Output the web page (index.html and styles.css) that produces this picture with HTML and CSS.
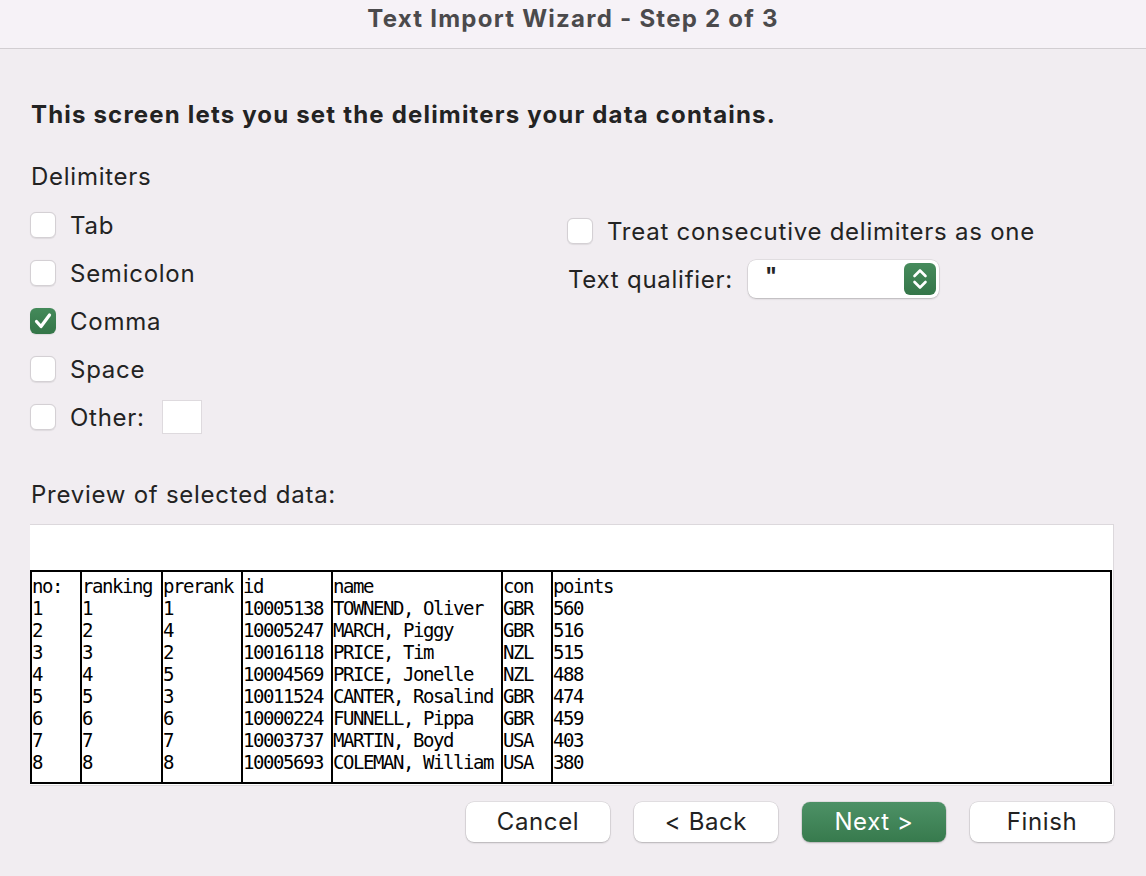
FILE: index.html
```html
<!DOCTYPE html>
<html>
<head>
<meta charset="utf-8">
<link rel="stylesheet" href="styles.css">
</head>
<body>
<div class="window">
  <div class="titlebar">Text Import Wizard - Step 2 of 3</div>
  <div class="content">
    <h1 class="heading">This screen lets you set the delimiters your data contains.</h1>
    <div class="section-label">Delimiters</div>
    <div class="options">
      <div class="col-left">
        <label class="opt"><span class="cb"></span><span>Tab</span></label>
        <label class="opt"><span class="cb"></span><span>Semicolon</span></label>
        <label class="opt"><span class="cb checked"><svg viewBox="0 0 26 26" width="26" height="26"><path d="M6.5 13.5 L11 18.5 L19.5 7" fill="none" stroke="#fff" stroke-width="3.2" stroke-linecap="round" stroke-linejoin="round"/></svg></span><span>Comma</span></label>
        <label class="opt"><span class="cb"></span><span>Space</span></label>
        <label class="opt"><span class="cb"></span><span>Other:</span><span class="other-box"></span></label>
      </div>
      <div class="col-right">
        <label class="opt"><span class="cb"></span><span>Treat consecutive delimiters as one</span></label>
        <div class="qualifier">
          <span>Text qualifier:</span>
          <div class="select">
            <span class="select-val">"</span>
            <span class="stepper"><svg viewBox="0 0 32 32" width="32" height="32"><path d="M10.5 13 L16 7.5 L21.5 13" fill="none" stroke="#fff" stroke-width="2.6" stroke-linecap="round" stroke-linejoin="round"/><path d="M10.5 19 L16 24.5 L21.5 19" fill="none" stroke="#fff" stroke-width="2.6" stroke-linecap="round" stroke-linejoin="round"/></svg></span>
          </div>
        </div>
      </div>
    </div>
    <div class="section-label preview-label">Preview of selected data:</div>
    <div class="preview">
      <div class="grid">
        <div class="gcol c1">no:<br>1<br>2<br>3<br>4<br>5<br>6<br>7<br>8</div>
        <div class="gcol c2">ranking<br>1<br>2<br>3<br>4<br>5<br>6<br>7<br>8</div>
        <div class="gcol c3">prerank<br>1<br>4<br>2<br>5<br>3<br>6<br>7<br>8</div>
        <div class="gcol c4">id<br>10005138<br>10005247<br>10016118<br>10004569<br>10011524<br>10000224<br>10003737<br>10005693</div>
        <div class="gcol c5">name<br>TOWNEND, Oliver<br>MARCH, Piggy<br>PRICE, Tim<br>PRICE, Jonelle<br>CANTER, Rosalind<br>FUNNELL, Pippa<br>MARTIN, Boyd<br>COLEMAN, William</div>
        <div class="gcol c6">con<br>GBR<br>GBR<br>NZL<br>NZL<br>GBR<br>GBR<br>USA<br>USA</div>
        <div class="gcol c7">points<br>560<br>516<br>515<br>488<br>474<br>459<br>403<br>380</div>
      </div>
    </div>
    <div class="buttons">
      <button class="btn">Cancel</button>
      <button class="btn">&lt; Back</button>
      <button class="btn primary">Next &gt;</button>
      <button class="btn">Finish</button>
    </div>
  </div>
</div>
</body>
</html>
```

FILE: styles.css
```css
* { box-sizing: border-box; }
html, body { margin: 0; padding: 0; }
body {
  width: 1146px;
  height: 876px;
  background: #f1edf1;
  font-family: "Inter", "Liberation Sans", sans-serif;
  color: #232323;
  overflow: hidden;
}
.window { width: 1146px; height: 876px; }
.titlebar {
  height: 49px;
  background: #f6f2f7;
  border-bottom: 1px solid #d2ced2;
  text-align: center;
  font-family: "Inter", "Liberation Sans", sans-serif;
  font-weight: 700;
  font-size: 24px;
  letter-spacing: 1.25px;
  line-height: 38px;
  color: #4b4a4c;
}
.content { padding: 0 32px 0 31px; }
.heading {
  margin: 51px 0 0 0;
  font-size: 24px;
  font-weight: 700;
  letter-spacing: 1.18px;
  line-height: 30px;
  color: #232323;
}
.section-label {
  margin-top: 32px;
  font-size: 24px;
  letter-spacing: 0.74px;
  line-height: 30px;
}
.options {
  display: grid;
  grid-template-columns: 537px 1fr;
  margin-top: 9px;
}
.opt {
  display: flex;
  align-items: center;
  height: 48px;
  font-size: 24px;
  letter-spacing: 0.74px;
  gap: 14px;
}
.cb {
  width: 26px;
  height: 26px;
  flex: none;
  background: #fff;
  border: 1px solid #d4d0d4;
  border-radius: 6px;
  box-shadow: 0 0.5px 1px rgba(0,0,0,0.08);
  margin-left: -1px;
  display: block;
}
.cb.checked {
  border: none;
  background: linear-gradient(#448a5a, #347548);
}
.cb svg { display: block; }
.other-box {
  width: 40px;
  height: 34px;
  background: #fff;
  border: 1px solid #dedade;
  margin-left: 3px;
}
.col-right { padding-top: 6px; }
.qualifier {
  display: flex;
  align-items: center;
  height: 48px;
  font-size: 24px;
  letter-spacing: 0.74px;
  gap: 15px;
}
.select {
  width: 191px;
  height: 38px;
  background: #fff;
  border-radius: 8px;
  box-shadow: 0 0 0 0.5px rgba(0,0,0,0.12), 0 1px 2px rgba(0,0,0,0.18);
  display: flex;
  align-items: center;
  justify-content: space-between;
  padding: 0 3px 0 17px;
}
.select-val { font-size: 22px; font-weight: 700; line-height: 1; margin-top: -8px; }
.stepper {
  width: 32px;
  height: 32px;
  border-radius: 6px;
  background: linear-gradient(#468b5c, #357649);
}
.stepper svg { display: block; }
.preview-label { margin-top: 39px; }
.preview {
  margin-top: 14px;
  margin-left: -1px;
  width: 1084px;
  height: 262px;
  background: #fff;
  border: 1px solid #dcd8dc;
  border-left: none;
  padding: 45px 1px 1px 0;
}
.grid {
  display: grid;
  grid-template-columns: 48px 81px 80px 90px 170px 50px 1fr;
  height: 214px;
  border: 2px solid #000;
  font-family: "DejaVu Sans Mono", monospace;
  font-size: 19px;
  letter-spacing: -1.44px;
  line-height: 22px;
  color: #000;
}
.gcol {
  padding: 3px 0 0 0;
  white-space: nowrap;
  overflow: hidden;
}
.gcol + .gcol { border-left: 2px solid #000; }
.buttons {
  display: flex;
  justify-content: flex-end;
  gap: 24px;
  margin-top: 16px;
  padding-right: 0;
}
.btn {
  width: 144px;
  height: 40px;
  border: none;
  border-radius: 8px;
  background: #fff;
  box-shadow: 0 0 0 0.5px rgba(0,0,0,0.12), 0 1px 2px rgba(0,0,0,0.2);
  font-family: "Inter", "Liberation Sans", sans-serif;
  font-size: 24px;
  letter-spacing: 0.6px;
  line-height: 38px;
  color: #222;
  padding: 0;
}
.btn.primary {
  background: linear-gradient(#4d9166, #377a4d);
  color: #fff;
}
```
